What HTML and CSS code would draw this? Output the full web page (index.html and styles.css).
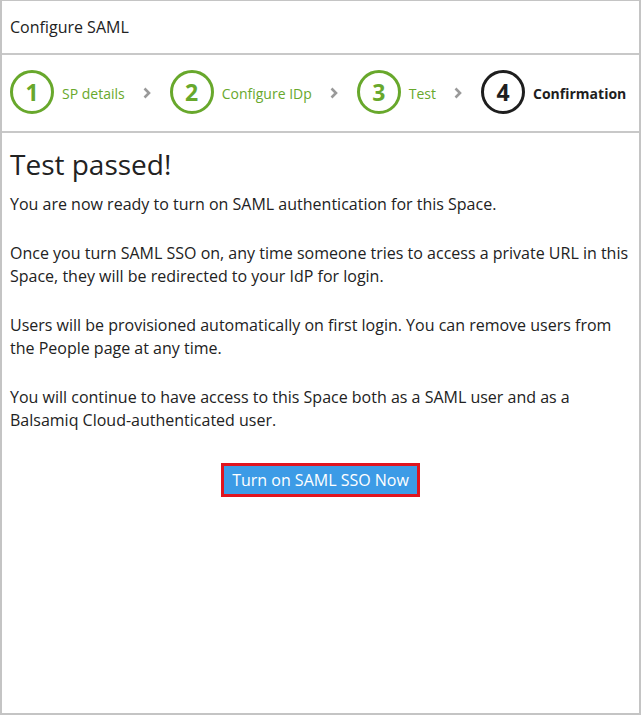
FILE: index.html
```html
<!DOCTYPE html>
<html lang="en">
<head>
  <meta charset="UTF-8">
  <title>Configure SAML</title>
  <link rel="stylesheet" href="styles.css">
</head>
<body>

<div class="panel">
  <div class="panel-title">Configure SAML</div>

  <div class="steps">
    <div class="step done">
      <span class="step-num">1</span>
      <span class="step-label">SP details</span>
    </div>
    <svg class="chev" width="8" height="12" viewBox="0 0 8 12"><path d="M1.5 1.5 L6 6 L1.5 10.5" fill="none" stroke="#9a9a9a" stroke-width="2.6"/></svg>
    <div class="step done">
      <span class="step-num">2</span>
      <span class="step-label">Configure IDp</span>
    </div>
    <svg class="chev" width="8" height="12" viewBox="0 0 8 12"><path d="M1.5 1.5 L6 6 L1.5 10.5" fill="none" stroke="#9a9a9a" stroke-width="2.6"/></svg>
    <div class="step done">
      <span class="step-num">3</span>
      <span class="step-label">Test</span>
    </div>
    <svg class="chev" width="8" height="12" viewBox="0 0 8 12"><path d="M1.5 1.5 L6 6 L1.5 10.5" fill="none" stroke="#9a9a9a" stroke-width="2.6"/></svg>
    <div class="step current">
      <span class="step-num">4</span>
      <span class="step-label">Confirmation</span>
    </div>
  </div>

  <div class="content">
    <h1>Test passed!</h1>
    <p>You are now ready to turn on SAML authentication for this Space.</p>
    <p>Once you turn SAML SSO on, any time someone tries to access a private URL in this Space, they will be redirected to your IdP for login.</p>
    <p>Users will be provisioned automatically on first login. You can remove users from the People page at any time.</p>
    <p>You will continue to have access to this Space both as a SAML user and as a Balsamiq Cloud-authenticated user.</p>
    <div class="actions">
      <button class="btn-primary">Turn on SAML SSO Now</button>
    </div>
  </div>
</div>

</body>
</html>
```

FILE: styles.css
```css
body {
  margin: 0;
  font-family: 'Open Sans', sans-serif;
  color: #222;
  background: #fff;
}

.panel {
  width: 641px;
  height: 715px;
  box-sizing: border-box;
  border: 1px solid #c4c4c4;
  border-left-width: 2px;
  border-right-width: 2px;
  border-bottom-width: 2px;
}

.panel-title {
  height: 52px;
  line-height: 52px;
  padding: 0 8px;
  font-size: 16px;
  border-bottom: 2px solid #c8c8c8;
}

.steps {
  display: flex;
  align-items: center;
  height: 76px;
  padding: 0 8px;
  border-bottom: 2px solid #c8c8c8;
  white-space: nowrap;
}

.step {
  display: flex;
  align-items: center;
  gap: 8px;
  flex-shrink: 0;
}

.step-num {
  width: 38px;
  height: 38px;
  margin-top: -2px;
  border: 3px solid #68a82c;
  border-radius: 50%;
  display: flex;
  align-items: center;
  justify-content: center;
  font-size: 23px;
  font-weight: bold;
  color: #68a82c;
}

.step-label {
  font-size: 14px;
  color: #68a82c;
}

.step.current .step-num {
  border-color: #1e1e1e;
  color: #1e1e1e;
}

.step.current .step-label {
  color: #1e1e1e;
  font-weight: bold;
}

.chev {
  flex-shrink: 0;
  margin: 0 19px 0 18px;
}

.content {
  padding: 0 8px;
}

.content h1 {
  font-size: 28px;
  font-weight: normal;
  line-height: 36px;
  margin: 13px 0 11px;
}

.content p {
  font-size: 16px;
  line-height: 23.5px;
  margin: 0 0 25px;
}

.actions {
  text-align: center;
  margin-top: 30px;
}

.btn-primary {
  font-family: 'Open Sans', sans-serif;
  font-size: 16px;
  line-height: 24px;
  color: #fff;
  background: #3c9be6;
  border: 3px solid #e0141e;
  padding: 2px 8px;
  cursor: pointer;
}
```
